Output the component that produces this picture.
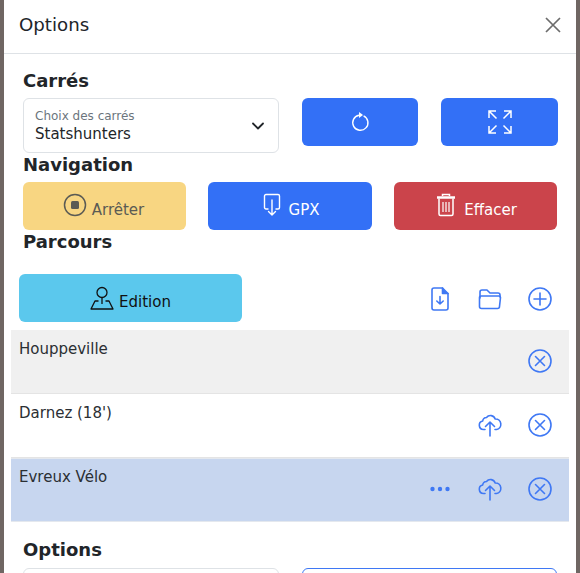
<style>
:global(body) { margin: 0; background: #6f6663; }
.modal { box-sizing: border-box; width: 572px; height: 573px; margin-left: 4px; background: #fff; overflow: hidden; color: #212529; font-family: "DejaVu Sans", sans-serif; font-size: 15px; }
.head { box-sizing: border-box; height: 54px; border-bottom: 1px solid #dee2e6; display: flex; align-items: center; justify-content: space-between; padding: 0 14px 4px 15px; }
.head h1 { margin: 0; font-size: 18.2px; font-weight: 400; line-height: 24px; }
.close { display: block; color: #6c6c6c; }
.body { padding: 16px 19px 0; }
h2 { margin: 0; font-size: 18px; font-weight: 700; line-height: 22px; }
.squares { display: grid; grid-template-columns: 256px 116px 117px; column-gap: 23px; align-items: start; margin-top: 6px; }
.select { box-sizing: border-box; height: 55px; border: 1px solid #dee2e6; border-radius: 6px; padding: 10px 12px 0 11px; position: relative; background: #fff; }
.select small { display: block; font-size: 12px; line-height: 15px; color: #6c757d; }
.select span { display: block; line-height: 19px; margin-top: 1px; }
.chev { position: absolute; right: 13px; top: 20px; }
.btn { box-sizing: border-box; height: 48px; border-radius: 6px; display: flex; align-items: center; justify-content: center; gap: 5px; }
.blue { background: #3370f6; color: #fff; }
.nav { display: grid; grid-template-columns: 163px 164px 163px; column-gap: 22px; margin-top: 6px; }
.nav svg { margin-bottom: 2px; }
.nav .blue, .nav .red { gap: 8px; padding-left: 2px; }
.nav-title { margin-top: 1px; }
.yellow { background: #f8d682; color: #5b5b54; padding-right: 2px; }
.red { background: #cb444b; color: #fff; }
.btn .lbl { position: relative; top: 4px; }
.parcours-title { margin-top: 1px; }
.tools { display: flex; align-items: center; margin: 21px 0 0 -4px; height: 48px; }
.edit { width: 223px; background: #5bc8ed; color: #111; }
.tool-icons { margin-left: auto; display: grid; grid-template-columns: repeat(3, 50px); justify-items: center; align-items: center; margin-right: -8px; position: relative; top: 1px; }
.list { margin: 8px 0 0 -12px; width: 558px; }
.row { box-sizing: border-box; height: 64px; padding: 9px 0 0 8px; border-bottom: 1px solid #e4e4e4; display: flex; justify-content: space-between; line-height: 20px; color: #2b2f33; }
.row.grey { background: #f0f0f0; }
.row.sel { background: #c7d6ef; padding-top: 8px; border-top: 1px solid #e4e8ee; border-bottom: 1px solid #e4e8ee; }
.acts { display: grid; grid-template-columns: repeat(3, 50px); justify-items: center; align-items: center; height: 40px; margin: 2px 4px 0 0; }
.opt-title { margin-top: 17px; }
.opt { display: grid; grid-template-columns: 256px 256px; column-gap: 23px; margin-top: 7px; }
.opt div { height: 40px; box-sizing: border-box; border-radius: 6px; border: 1px solid #dee2e6; }
.opt .out { border-color: #3f78f4; width: 255px; }
svg { display: block; }
.ic { fill: none; stroke: #3f78f4; stroke-width: 1.6; stroke-linecap: round; stroke-linejoin: round; }
</style>

<div class="modal">
  <div class="head">
    <h1>Options</h1>
    <svg class="close" width="18" height="18" viewBox="0 0 18 18" fill="none" stroke="currentColor" stroke-width="1.7"><path d="M2 2l14 14M16 2L2 16"/></svg>
  </div>
  <div class="body">
    <h2>Carrés</h2>
    <div class="squares">
      <div class="select">
        <small>Choix des carrés</small>
        <span>Statshunters</span>
        <svg class="chev" width="14" height="14" viewBox="0 0 14 14" fill="none" stroke="#212529" stroke-width="1.8" stroke-linecap="round" stroke-linejoin="round"><path d="M2 4.500l5 5 5-5"/></svg>
      </div>
      <div class="btn blue">
        <svg width="20" height="22" viewBox="0 0 20 22" fill="none" stroke="#fff" stroke-width="1.4"><path d="M9 4.200a7.600 7.600 0 1 0 4.600.6"/><path d="M9 1l4 3-4 3z" fill="#fff" stroke="none"/></svg>
      </div>
      <div class="btn blue">
        <svg width="26" height="26" viewBox="0 0 26 26" fill="none" stroke="#fff" stroke-width="1.5"><path d="M2 9V2h7M2 2l7.500 7.500M17 2h7v7M24 2l-7.500 7.500M2 17v7h7M2 24l7.500-7.500M17 24h7v-7M24 24l-7.500-7.500"/></svg>
      </div>
    </div>
    <h2 class="nav-title">Navigation</h2>
    <div class="nav">
      <div class="btn yellow">
        <svg width="24" height="24" viewBox="0 0 24 24" fill="none"><circle cx="12" cy="12" r="10.500" stroke="#5b5b54" stroke-width="1.500"/><rect x="8" y="8" width="8" height="8" rx="1.500" fill="#5b5b54"/></svg>
        <span class="lbl">Arrêter</span>
      </div>
      <div class="btn blue">
        <svg width="18" height="24" viewBox="0 0 18 24" fill="none" stroke="#fff" stroke-width="1.400" stroke-linecap="round" stroke-linejoin="round"><path d="M5 16H3a1.500 1.500 0 0 1-1.500-1.500V3A1.500 1.500 0 0 1 3 1.500h12A1.500 1.500 0 0 1 16.500 3v11.500A1.500 1.500 0 0 1 15 16h-2"/><path d="M9 7v15M5.500 18.500L9 22l3.500-3.500"/></svg>
        <span class="lbl">GPX</span>
      </div>
      <div class="btn red">
        <svg width="20" height="24" viewBox="0 0 20 24" fill="none" stroke="#fff" stroke-width="1.500"><path d="M1 4.500h18" stroke-width="2.500"/><path d="M6.500 3V1.500h7V3" /><path d="M3 5.500V21a1.500 1.500 0 0 0 1.500 1.500h11A1.500 1.500 0 0 0 17 21V5.500"/><path d="M7 9v10M10 9v10M13 9v10" stroke-width="1.200"/></svg>
        <span class="lbl">Effacer</span>
      </div>
    </div>
    <h2 class="parcours-title">Parcours</h2>
    <div class="tools">
      <div class="btn edit">
        <svg width="24" height="24" viewBox="0 0 24 24" fill="none" stroke="#111" stroke-width="1.300" stroke-linejoin="round"><circle cx="12" cy="6.500" r="5"/><path d="M12 11.500v6.500"/><path d="M8.500 15H5L1 23h22l-4-8h-3.500"/></svg>
        <span class="lbl">Edition</span>
      </div>
      <div class="tool-icons">
        <svg class="ic" width="18" height="24" viewBox="0 0 18 24"><path d="M11.500 1H3a2 2 0 0 0-2 2v18a2 2 0 0 0 2 2h12a2 2 0 0 0 2-2V6.500z"/><path d="M11.500 1v5.500H17" fill="#3f78f4"/><path d="M9 9.500v7.500M5.800 14L9 17l3.200-3"/></svg>
        <svg class="ic" width="24" height="22" viewBox="0 0 24 22"><path d="M2 10V4a2 2 0 0 1 2-2h5l3 3h8a2 2 0 0 1 2 2v2"/><path d="M1.500 9.500a1.500 1.500 0 0 1 1.500-1.500h18a1.500 1.500 0 0 1 1.500 1.500l-1 9a2 2 0 0 1-2 2h-16a2 2 0 0 1-2-2z"/></svg>
        <svg class="ic" width="24" height="24" viewBox="0 0 24 24"><circle cx="12" cy="12" r="11"/><path d="M12 6v12M6 12h12"/></svg>
      </div>
    </div>
    <div class="list">
      <div class="row grey">
        <span>Houppeville</span>
        <div class="acts">
          <i></i><i></i>
          <svg class="ic" width="24" height="24" viewBox="0 0 24 24"><circle cx="12" cy="12" r="11"/><path d="M7.500 7.500l9 9M16.500 7.500l-9 9"/></svg>
        </div>
      </div>
      <div class="row">
        <span>Darnez (18')</span>
        <div class="acts">
          <i></i>
          <svg class="ic" width="24" height="24" viewBox="0 0 24 24"><path d="M7 16.500H5.500a4.300 4.300 0 0 1-.8-8.500A4 4 0 0 1 8.500 4.500 5 5 0 0 1 17.200 6a5.300 5.300 0 0 1 1.300 10.500H17"/><path d="M12 23V9M7.500 13.500L12 9l4.500 4.500"/></svg>
          <svg class="ic" width="24" height="24" viewBox="0 0 24 24"><circle cx="12" cy="12" r="11"/><path d="M7.500 7.500l9 9M16.500 7.500l-9 9"/></svg>
        </div>
      </div>
      <div class="row sel">
        <span>Evreux Vélo</span>
        <div class="acts">
          <svg width="20" height="6" viewBox="0 0 20 6" fill="#3f78f4"><circle cx="2.500" cy="3" r="2.200"/><circle cx="10" cy="3" r="2.200"/><circle cx="17.500" cy="3" r="2.200"/></svg>
          <svg class="ic" width="24" height="24" viewBox="0 0 24 24"><path d="M7 16.500H5.500a4.300 4.300 0 0 1-.8-8.500A4 4 0 0 1 8.500 4.500 5 5 0 0 1 17.200 6a5.300 5.300 0 0 1 1.300 10.500H17"/><path d="M12 23V9M7.500 13.500L12 9l4.500 4.500"/></svg>
          <svg class="ic" width="24" height="24" viewBox="0 0 24 24"><circle cx="12" cy="12" r="11"/><path d="M7.500 7.500l9 9M16.500 7.500l-9 9"/></svg>
        </div>
      </div>
    </div>
    <h2 class="opt-title">Options</h2>
    <div class="opt"><div></div><div class="out"></div></div>
  </div>
</div>
